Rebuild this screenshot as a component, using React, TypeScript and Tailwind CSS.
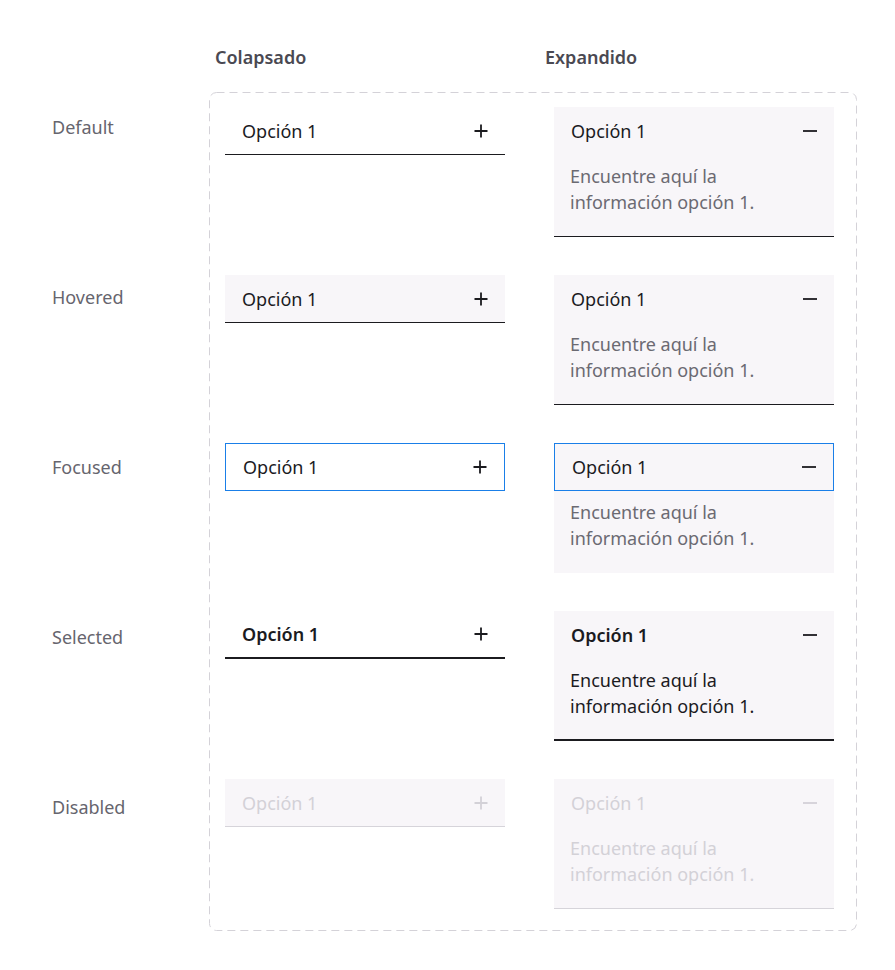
import React from "react";

type State = "default" | "hovered" | "focused" | "selected" | "disabled";

const Plus = ({ color }: { color: string }) => (
  <svg width="16" height="16" viewBox="0 0 16 16" fill="none">
    <path d="M8 1.5v13M1.5 8h13" stroke={color} strokeWidth="1.8" />
  </svg>
);
const Minus = ({ color }: { color: string }) => (
  <svg width="16" height="16" viewBox="0 0 16 16" fill="none">
    <path d="M1 8h14" stroke={color} strokeWidth="1.8" />
  </svg>
);

function Collapsed({ state }: { state: State }) {
  const disabled = state === "disabled";
  const iconColor = disabled ? "#d3d1d7" : "#1b1b1f";
  let cls = "h-[48px] flex items-center justify-between pl-[17px] pr-[16px] ";
  if (state === "default") cls += "border-b border-[#1b1b1f] bg-white";
  if (state === "hovered") cls += "border-b border-[#1b1b1f] bg-[#f8f6f9]";
  if (state === "focused") cls += "border border-[#1a7fe8] bg-white pl-[16px] pr-[15px]";
  if (state === "selected") cls += "border-b-2 border-[#1b1b1f] bg-white";
  if (state === "disabled") cls += "border-b border-[#d6d4da] bg-[#f8f6f9]";
  return (
    <div className="w-[280px]">
      <div className={cls}>
        <span
          className={
            "text-[18px] leading-[24px] " +
            (disabled ? "text-[#d3d1d7]" : "text-[#1b1b1f]") +
            (state === "selected" ? " font-semibold" : "")
          }
        >
          Opción 1
        </span>
        <Plus color={iconColor} />
      </div>
    </div>
  );
}

function Expanded({ state }: { state: State }) {
  const disabled = state === "disabled";
  const iconColor = disabled ? "#d3d1d7" : "#1b1b1f";
  let headerCls = "h-[48px] flex items-center justify-between pl-[17px] pr-[16px] ";
  if (state === "focused") headerCls += "border border-[#1a7fe8] pl-[16px] pr-[15px]";
  let wrap = "w-[280px] h-[130px] bg-[#f8f6f9] flex flex-col ";
  if (state === "default" || state === "hovered") wrap += "border-b border-[#1b1b1f]";
  if (state === "selected") wrap += "border-b-2 border-[#1b1b1f]";
  if (state === "disabled") wrap += "border-b border-[#d6d4da]";
  return (
    <div className={wrap}>
      <div className={headerCls}>
        <span
          className={
            "text-[18px] leading-[24px] " +
            (disabled ? "text-[#d3d1d7]" : "text-[#1b1b1f]") +
            (state === "selected" ? " font-semibold" : "")
          }
        >
          Opción 1
        </span>
        <Minus color={iconColor} />
      </div>
      <div
        className={
          "pl-[16px] pt-[8px] text-[18px] leading-[26px] " +
          (disabled
            ? "text-[#d3d1d7]"
            : state === "selected"
            ? "text-[#1b1b1f]"
            : "text-[#6b6a72]")
        }
      >
        Encuentre aquí la
        <br />
        información opción 1.
      </div>
    </div>
  );
}

const rows: { label: string; state: State }[] = [
  { label: "Default", state: "default" },
  { label: "Hovered", state: "hovered" },
  { label: "Focused", state: "focused" },
  { label: "Selected", state: "selected" },
  { label: "Disabled", state: "disabled" },
];

export default function App() {
  return (
    <div
      className="w-[895px] h-[970px] bg-white"
      style={{ fontFamily: '"Noto Sans", "Open Sans", sans-serif' }}
    >
      <div className="pt-[45px] flex h-[69px] text-[18px] leading-[24px] font-semibold text-[#4a4952]">
        <div className="w-[215px]" />
        <div className="w-[330px]">Colapsado</div>
        <div>Expandido</div>
      </div>
      <div className="mt-[23px] flex items-start">
        <div className="w-[209px] pl-[52px] pt-[23px] flex flex-col gap-[146px]">
          {rows.map((r) => (
            <div key={r.label} className="h-[24px] text-[18px] leading-[24px] text-[#66656e]">
              {r.label}
            </div>
          ))}
        </div>
        <div className="relative w-[649px] h-[840px] pt-[15px] pl-[16px] flex flex-col gap-[38px]">
          <svg
            className="absolute inset-0 pointer-events-none"
            width="649"
            height="840"
            viewBox="0 0 649 840"
            fill="none"
          >
            <rect
              x="0.5"
              y="0.5"
              width="647"
              height="838"
              rx="7"
              stroke="#d4d2d8"
              strokeDasharray="8 5"
            />
          </svg>
          {rows.map((r) => (
            <div key={r.label} className="flex gap-[49px] h-[130px]">
              <Collapsed state={r.state} />
              <Expanded state={r.state} />
            </div>
          ))}
        </div>
      </div>
    </div>
  );
}
